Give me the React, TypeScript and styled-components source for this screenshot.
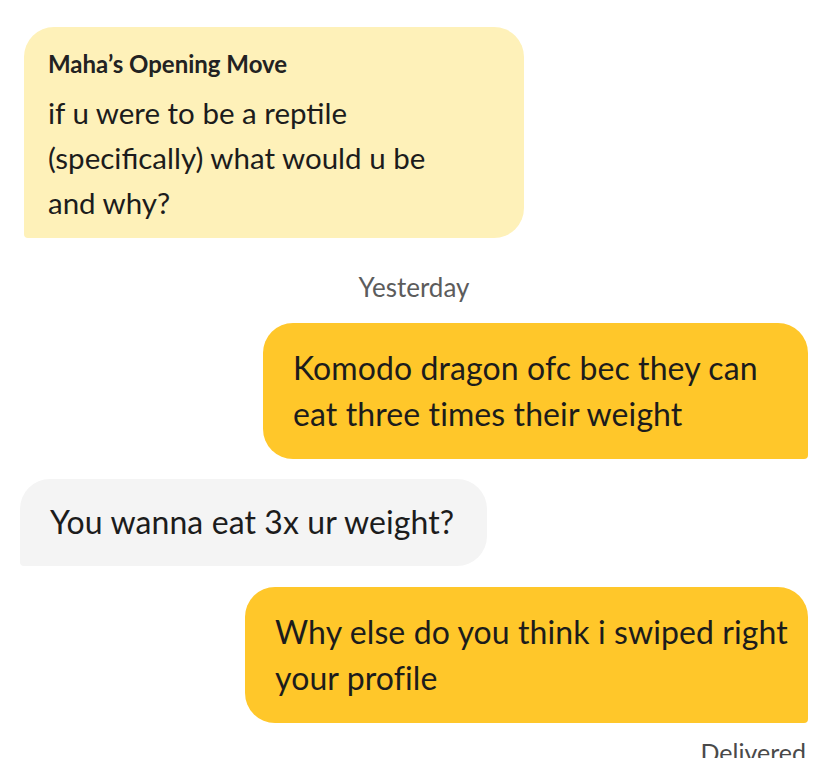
import styled, { createGlobalStyle } from 'styled-components'

const GlobalStyle = createGlobalStyle`
  html, body {
    margin: 0;
    padding: 0;
    background: #ffffff;
    overflow: hidden;
  }
  body {
    font-family: Lato, "Open Sans", sans-serif;
    color: #1c1c1c;
  }
`

type Side = 'left' | 'right'
type Tone = 'pale' | 'yellow' | 'gray'

const tones: Record<Tone, string> = {
  pale: '#fef1b9',
  yellow: '#ffc72a',
  gray: '#f4f4f4',
}

const Thread = styled.div`
  display: flex;
  flex-direction: column;
  width: 828px;
  height: 758px;
  padding: 27px 20px 0 20px;
  box-sizing: border-box;
`

const Bubble = styled.div<{ $side: Side; $tone: Tone; $width: number }>`
  align-self: ${p => (p.$side === 'left' ? 'flex-start' : 'flex-end')};
  width: ${p => p.$width}px;
  box-sizing: border-box;
  background: ${p => tones[p.$tone]};
  border-radius: ${p => (p.$side === 'left' ? '30px 30px 30px 4px' : '30px 30px 4px 30px')};
  padding: 22px 24px 22px 30px;
  font-size: 32px;
  line-height: 46px;
  letter-spacing: 0.1px;
  white-space: nowrap;
`

const OpeningBubble = styled(Bubble)`
  margin-left: 4px;
  padding: 22px 24px 13px 24px;
  font-size: 29.5px;
  line-height: 45px;
  letter-spacing: 0;
`

const ReplyBubble = styled(Bubble)`
  padding-top: 20px;
  padding-bottom: 21px;
`

const Title = styled.div`
  font-size: 24px;
  font-weight: 700;
  line-height: 30px;
  margin-bottom: 11px;
  color: #222;
`

const DayLabel = styled.div`
  align-self: center;
  margin: 37px 0 24px 0;
  font-size: 26px;
  line-height: 24px;
  color: #5c5c5c;
`

const Gap = styled.div<{ $size: number }>`
  height: ${p => p.$size}px;
  flex: none;
`

const Status = styled.div`
  align-self: flex-end;
  margin-top: 17px;
  font-size: 25px;
  line-height: 24px;
  color: #4a4a4a;
  padding-right: 2px;
`

export default function App() {
  return (
    <>
      <GlobalStyle />
      <Thread>
        <OpeningBubble $side="left" $tone="pale" $width={500}>
          <Title>Maha’s Opening Move</Title>
          if u were to be a reptile
          <br />
          (specifically) what would u be
          <br />
          and why?
        </OpeningBubble>
        <DayLabel>Yesterday</DayLabel>
        <Bubble $side="right" $tone="yellow" $width={545}>
          Komodo dragon ofc bec they can
          <br />
          eat three times their weight
        </Bubble>
        <Gap $size={20} />
        <ReplyBubble $side="left" $tone="gray" $width={467}>
          You wanna eat 3x ur weight?
        </ReplyBubble>
        <Gap $size={21} />
        <Bubble $side="right" $tone="yellow" $width={563}>
          Why else do you think i swiped right
          <br />
          your profile
        </Bubble>
        <Status>Delivered</Status>
      </Thread>
    </>
  )
}
